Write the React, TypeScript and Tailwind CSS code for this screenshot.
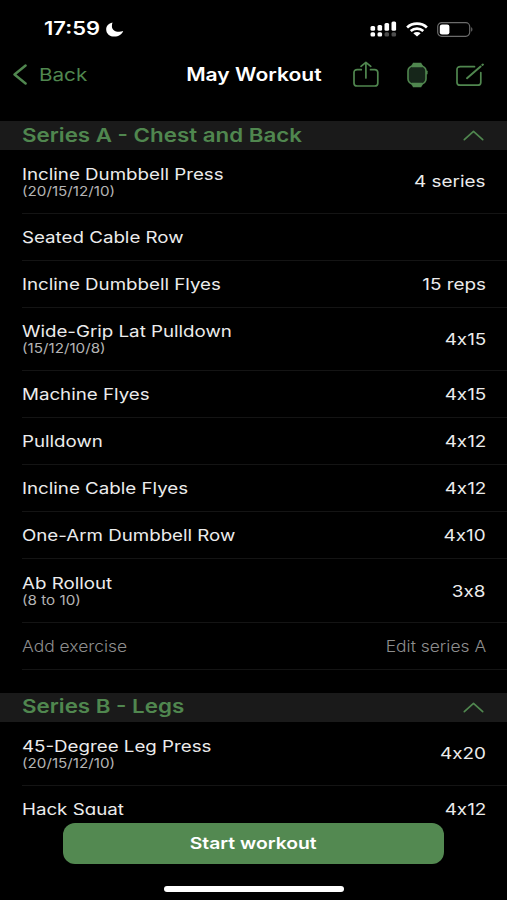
import type { ReactNode } from "react";
import clsx from "clsx";

interface Exercise {
  name: string;
  note?: string;
  amount?: string;
}

interface Series {
  id: string;
  title: string;
  editable?: boolean;
  exercises: Exercise[];
}

const seriesList: Series[] = [
  {
    id: "A",
    title: "Series A - Chest and Back",
    editable: true,
    exercises: [
      { name: "Incline Dumbbell Press", note: "(20/15/12/10)", amount: "4 series" },
      { name: "Seated Cable Row" },
      { name: "Incline Dumbbell Flyes", amount: "15 reps" },
      { name: "Wide-Grip Lat Pulldown", note: "(15/12/10/8)", amount: "4x15" },
      { name: "Machine Flyes", amount: "4x15" },
      { name: "Pulldown", amount: "4x12" },
      { name: "Incline Cable Flyes", amount: "4x12" },
      { name: "One-Arm Dumbbell Row", amount: "4x10" },
      { name: "Ab Rollout", note: "(8 to 10)", amount: "3x8" },
    ],
  },
  {
    id: "B",
    title: "Series B - Legs",
    exercises: [
      { name: "45-Degree Leg Press", note: "(20/15/12/10)", amount: "4x20" },
      { name: "Hack Squat", amount: "4x12" },
    ],
  },
];

const StatusBar = () => (
  <div className="flex h-[50px] items-center justify-between pt-2 pr-[33px] pl-[44px] text-white">
    <div className="flex items-center">
      <span className="w-[62px] origin-left scale-x-[1.22] text-[18px] leading-6 font-semibold whitespace-nowrap">17:59</span>
      <svg className="h-[15px] w-[18px]" viewBox="0 0 18 15" fill="currentColor">
        <path d="M6.500.5C2.500 1.300.2 4 .2 7.400c0 4.200 3.500 7.200 8.200 7.200 4.200 0 7.600-2.200 8.800-5.600-1.400.6-2.700.8-4.100.8-4.300 0-7.200-2.100-7.200-5.600 0-1.400.2-2.600.6-3.700Z" />
      </svg>
    </div>
    <div className="flex items-center">
      <svg className="mr-[9px] h-4 w-[27px]" viewBox="0 0 27 16" fill="currentColor">
        <rect x="0.500" y="5" width="4.600" height="4.800" rx="1.500" />
        <rect x="7.500" y="4" width="4.600" height="5.800" rx="1.500" />
        <rect x="14.500" y="2" width="4.600" height="7.800" rx="1.500" />
        <rect x="21.500" y="0.500" width="4.600" height="9.300" rx="1.500" />
        <rect x="0.500" y="11.300" width="4.600" height="4.200" rx="1.500" />
        <rect x="7.500" y="11.300" width="4.600" height="4.200" rx="1.500" />
        <rect x="14.500" y="11.300" width="4.600" height="4.200" rx="1.500" opacity="0.300" />
        <rect x="21.500" y="11.300" width="4.600" height="4.200" rx="1.500" opacity="0.300" />
      </svg>
      <svg className="mr-[9px] h-[15px] w-[22px]" viewBox="0 0 22 15" fill="none" stroke="currentColor" strokeWidth="2.700">
        <path d="M1.100 5.500C6.600.4 15.400.4 20.900 5.500" />
        <path d="M4.700 9C8.300 5.900 13.700 5.900 17.300 9" />
        <path d="M7.300 11.200c2.200-1.700 5.200-1.700 7.400 0L11 14.400Z" fill="currentColor" stroke="none" />
      </svg>
      <svg className="h-[15px] w-[37px]" viewBox="0 0 37 15">
        <rect x="0.700" y="0.700" width="32" height="13.600" rx="4" fill="none" stroke="#6b6b6b" strokeWidth="1.200" />
        <rect x="2.800" y="2.600" width="9.600" height="9.800" rx="2.200" fill="#fff" />
        <path d="M34.200 5.300c1.600.4 1.600 4 0 4.400Z" fill="#6b6b6b" />
      </svg>
    </div>
  </div>
);

const ShareIcon = () => (
  <svg className="h-[27px] w-[26px]" viewBox="0 0 26 27" fill="none" stroke="currentColor" strokeWidth="1.700" strokeLinecap="round" strokeLinejoin="round">
    <path d="M8.300 8.700H4.200C2.200 8.700 1 9.700 1 11.500V22.200c0 1.800 1.200 2.800 3.200 2.800h17.400c2 0 3.200-1 3.200-2.800V11.500c0-1.800-1.200-2.800-3.200-2.800h-4.100" />
    <path d="M12.900 17V1.500M8 5.300l4.900-4 4.900 4" />
  </svg>
);

const WatchIcon = () => (
  <svg className="h-[26px] w-[21px]" viewBox="0 0 21 26">
    <path d="M6 .8h8.200l2 4.200H4ZM4 21h12.200l-2 4.200H6Z" fill="currentColor" />
    <rect x="1" y="4" width="18" height="18" rx="5" fill="#16261a" stroke="currentColor" strokeWidth="1.600" />
    <path d="M4.600 4h11M4.600 22h11" stroke="currentColor" strokeWidth="2.400" />
    <rect x="19" y="8.500" width="1.600" height="4" rx="0.800" fill="currentColor" />
  </svg>
);

const ComposeIcon = () => (
  <svg className="h-6 w-7" viewBox="0 0 28 24" fill="none" stroke="currentColor" strokeWidth="1.700" strokeLinecap="round" strokeLinejoin="round">
    <path d="M18.500 3.700H4.300C2.200 3.700 1 4.600 1 6.400v13c0 1.800 1.200 2.800 3.300 2.800h17.200c2.100 0 3.300-1 3.300-2.800V9.600" />
    <path d="M11 15.200 24.600 3.600" strokeWidth="2" />
    <path d="M26.400 1.900l.5-.4" strokeWidth="2" />
  </svg>
);

const NavBar = () => (
  <div className="grid h-[71px] grid-cols-[1fr_auto_1fr] items-start pt-[11px] text-[#50874f]">
    <div className="flex h-[27px] items-center pl-[13px]">
      <svg className="mr-3 h-[21px] w-[14px]" viewBox="0 0 14 21" fill="none" stroke="currentColor" strokeWidth="2.400" strokeLinecap="round" strokeLinejoin="round">
        <path d="M12.600 1.500 1.500 10.500l11.100 9" />
      </svg>
      <span className="origin-left scale-x-[1.18] pt-px text-[17.5px] whitespace-nowrap">Back</span>
    </div>
    <h1 className="flex h-[27px] items-center text-[18px] font-semibold whitespace-nowrap text-white">
      <span className="scale-x-[1.17]">May Workout</span>
    </h1>
    <div className="flex h-[27px] items-center justify-end pr-[23px]">
      <ShareIcon />
      <div className="ml-7 flex"><WatchIcon /></div>
      <div className="ml-7 flex"><ComposeIcon /></div>
    </div>
  </div>
);

const SeriesHeader = ({ title }: { title: string }) => (
  <div className="flex h-[29px] items-center justify-between bg-[#1a1a1a] pr-[23px] pl-[22px] text-[#50874f]">
    <h2 className="origin-left scale-x-[1.175] text-[19px] leading-7 font-semibold whitespace-nowrap">{title}</h2>
    <svg className="h-[11px] w-[21px]" viewBox="0 0 21 11" fill="none" stroke="currentColor" strokeWidth="1.700" strokeLinecap="round" strokeLinejoin="round">
      <path d="M1.300 9.700 10.500 1.300l9.200 8.400" />
    </svg>
  </div>
);

const Row = ({ tall, children }: { tall?: boolean; children: ReactNode }) => (
  <div className={clsx("ml-[22px] flex items-center justify-between border-b border-[#141414] pr-[21px]", tall ? "h-[63.67px]" : "h-[47px]")}>
    {children}
  </div>
);

const ExerciseRow = ({ exercise }: { exercise: Exercise }) => (
  <Row tall={!!exercise.note}>
    <div className="origin-left scale-x-[1.17] whitespace-nowrap text-[#ececec]">
      <p className="text-[16px] leading-5">{exercise.name}</p>
      {exercise.note && <p className="text-[13px] leading-[15px] text-[#b4b4b4]">{exercise.note}</p>}
    </div>
    {/* calt off, otherwise Inter turns 4x15 into 4×15 */}
    <span className="origin-right scale-x-[1.18] text-[16px] leading-5 whitespace-nowrap text-[#ececec] [font-feature-settings:'calt'_0]">
      {exercise.amount}
    </span>
  </Row>
);

const App = () => {
  return (
    <div className="flex h-[900px] w-full flex-col overflow-hidden bg-black font-['Inter',sans-serif]">
      <StatusBar />
      <NavBar />
      <main className="h-[694px] shrink-0 overflow-hidden">
        {seriesList.map((series) => (
          <section key={series.id} className="mb-[23px]">
            <SeriesHeader title={series.title} />
            {series.exercises.map((exercise) => (
              <ExerciseRow key={exercise.name} exercise={exercise} />
            ))}
            {series.editable && (
              <Row>
                <span className="origin-left scale-x-[1.09] text-[16px] font-light text-[#8e8e8e]">Add exercise</span>
                <span className="origin-right scale-x-[1.09] text-[16px] font-light text-[#8e8e8e]">Edit series {series.id}</span>
              </Row>
            )}
          </section>
        ))}
      </main>
      <footer className="flex flex-col items-center pt-[8px]">
        <button className="h-[41px] w-[381px] rounded-[12px] bg-[#538951] text-[16.5px] font-semibold text-white">
          <span className="inline-block scale-x-[1.17]">Start workout</span>
        </button>
        <div className="mt-[22px] h-[6px] w-[180px] rounded-full bg-white" />
      </footer>
    </div>
  );
};

export default App;
